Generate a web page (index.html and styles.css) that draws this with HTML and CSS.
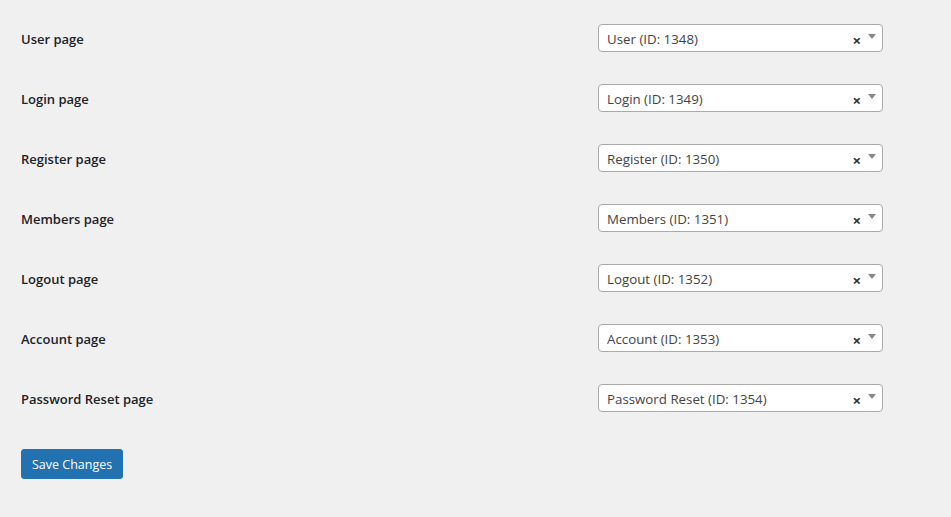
FILE: index.html
```html
<!DOCTYPE html>
<html>
<head>
<meta charset="utf-8">
<link rel="stylesheet" href="styles.css">
</head>
<body>
<form class="settings">
  <div class="rows">
    <div class="row"><div class="label">User page</div><div class="select"><span class="value">User (ID: 1348)</span><span class="clear">×</span><span class="arrow"></span></div></div>
    <div class="row"><div class="label">Login page</div><div class="select"><span class="value">Login (ID: 1349)</span><span class="clear">×</span><span class="arrow"></span></div></div>
    <div class="row"><div class="label">Register page</div><div class="select"><span class="value">Register (ID: 1350)</span><span class="clear">×</span><span class="arrow"></span></div></div>
    <div class="row"><div class="label">Members page</div><div class="select"><span class="value">Members (ID: 1351)</span><span class="clear">×</span><span class="arrow"></span></div></div>
    <div class="row"><div class="label">Logout page</div><div class="select"><span class="value">Logout (ID: 1352)</span><span class="clear">×</span><span class="arrow"></span></div></div>
    <div class="row"><div class="label">Account page</div><div class="select"><span class="value">Account (ID: 1353)</span><span class="clear">×</span><span class="arrow"></span></div></div>
    <div class="row"><div class="label">Password Reset page</div><div class="select"><span class="value">Password Reset (ID: 1354)</span><span class="clear">×</span><span class="arrow"></span></div></div>
  </div>
  <button type="button" class="button">Save Changes</button>
</form>
</body>
</html>
```
FILE: styles.css
```css
html, body {
  margin: 0;
  padding: 0;
  background: #f0f0f1;
}
body {
  font-family: "Open Sans", "Noto Sans", "Liberation Sans", sans-serif;
  font-size: 14px;
  color: #1d2327;
}
.settings {
  padding: 8px 0 0 21px;
}
.rows {
  display: flex;
  flex-direction: column;
}
.row {
  display: grid;
  grid-template-columns: 577px 285px;
  align-items: center;
  height: 60px;
}
.label {
  font-weight: 600;
  font-size: 13px;
  padding-top: 2px;
}
.select {
  box-sizing: border-box;
  height: 28px;
  background: #fff;
  border: 1px solid #aaa;
  border-radius: 4px;
  display: flex;
  align-items: center;
  padding: 1px 0 0 8px;
  color: #444;
  font-size: 13.3px;
}
.value {
  flex: 1;
  white-space: nowrap;
  overflow: hidden;
}
.clear {
  font-weight: 700;
  font-size: 15px;
  color: #333;
  margin-right: 7px;
  line-height: 1;
  padding-top: 3px;
}
.arrow {
  width: 0;
  height: 0;
  border-style: solid;
  border-width: 5px 4px 0 4px;
  border-color: #888 transparent transparent transparent;
  margin-right: 6px;
  margin-top: -4px;
}
.button {
  margin-top: 21px;
  background: #2271b1;
  border: 1px solid #2271b1;
  color: #fff;
  border-radius: 3px;
  font-family: inherit;
  font-size: 12.5px;
  height: 30px;
  padding: 0 10px;
  cursor: pointer;
}
```
